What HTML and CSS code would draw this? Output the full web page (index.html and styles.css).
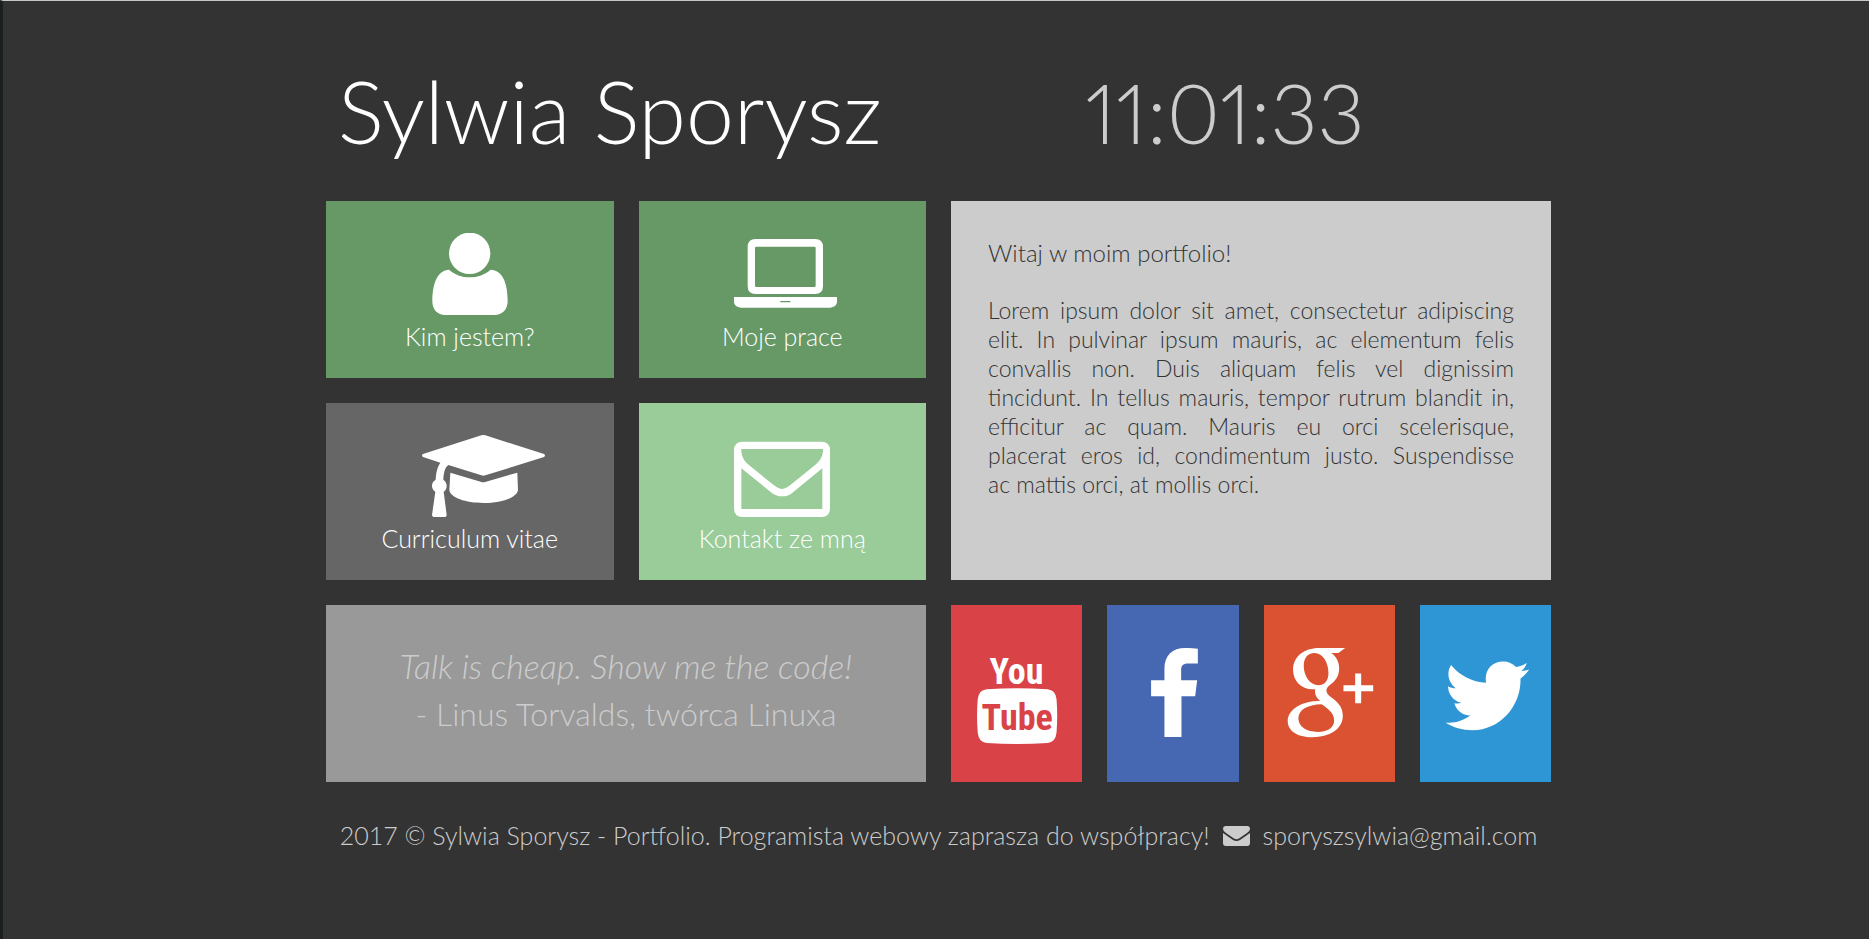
FILE: index.html
```html
<!DOCTYPE html>
<html lang="pl">
<head>
<meta charset="utf-8">
<meta name="viewport" content="width=device-width, initial-scale=1">
<title>Sylwia Sporysz - Portfolio</title>
<link rel="stylesheet" href="styles.css">
</head>
<body>
<div class="container">
  <header class="header">
    <h1 class="name">Sylwia Sporysz</h1>
    <time class="clock">11:01:33</time>
  </header>
  <main class="board">
    <nav class="tiles">
      <a class="tile tile-green" href="#about">
        <svg class="tile-icon" viewBox="208 114 480 252" aria-hidden="true"><circle cx="447" cy="175" r="62"/><path d="M385 224C402 239 424 247 447 247C471 247 493 239 510 224C545 226 561 262 561 318C561 344 545 360 521 360H374C350 360 335 344 335 318C335 262 352 226 385 224Z"/></svg>
        <span>Kim jestem?</span>
      </a>
      <a class="tile tile-green" href="#works">
        <svg class="tile-icon" viewBox="216 114 480 252" aria-hidden="true"><path fill-rule="evenodd" d="M377 132H555Q579 132 579 156V273Q579 297 555 297H377Q353 297 353 273V156Q353 132 377 132ZM379 155Q375 155 375 159V272Q375 276 379 276H553Q557 276 557 272V159Q557 155 553 155ZM312 306H621V320C621 331 610 338 596 338H337C323 338 312 331 312 320ZM451 318V322H481V318Z"/></svg>
        <span>Moje prace</span>
      </a>
      <a class="tile tile-dark" href="#cv">
        <svg class="tile-icon" viewBox="208 120 480 252" aria-hidden="true"><path d="M482 121q6-2 12 0L670 177q6 4 0 9L494 241q-6 2-12 0L383 210C374 216 369 232 368 254C374 258 378 264 378 272C378 280 375 286 369 290L378 360q0 5-4 6H339q-5-1-5-6L344 290C338 286 334 280 334 272C334 264 338 258 345 254C346 232 351 214 359 203L307 186q-6-5 0-9Z"/><path d="M389 233L480 260q8 3 16 0L590 233L592 286C588 308 544 324 489 324C434 324 390 308 386 286Z"/></svg>
        <span>Curriculum vitae</span>
      </a>
      <a class="tile tile-light" href="#contact">
        <svg class="tile-icon" viewBox="216 120 480 252" aria-hidden="true"><path fill-rule="evenodd" d="M338 140H574Q600 140 600 166V340Q600 366 574 366H338Q312 366 312 340V166Q312 140 338 140ZM334 162H579C580 180 572 196 558 208L484 268C474 276 466 282 456 282C446 282 438 276 428 268L354 208C340 196 333 180 334 162ZM334 220L422 291C436 302 446 304 456 304C468 304 478 302 490 291L577 220V342H334Z"/></svg>
        <span>Kontakt ze mną</span>
      </a>
    </nav>
    <section class="welcome">
      <p>Witaj w moim portfolio!</p>
      <p class="intro"><span class="full-lines">Lorem ipsum dolor sit amet, consectetur adipiscing elit. In pulvinar ipsum mauris, ac elementum felis convallis non. Duis aliquam felis vel dignissim tincidunt. In tellus mauris, tempor rutrum blandit in, efficitur ac quam. Mauris eu orci scelerisque,</span> <span class="full-lines">placerat eros id, condimentum justo. Suspendisse</span> ac mattis orci, at mollis orci.</p>
    </section>
    <blockquote class="quote">
      <em>Talk is cheap. Show me the code!</em>
      <span>- Linus Torvalds, twórca Linuxa</span>
    </blockquote>
    <nav class="socials">
      <a class="social youtube" href="#youtube" aria-label="YouTube">
        <svg viewBox="33 18 393 531"><text class="logo-text" x="229" y="256">You</text><path d="M140 270Q231 264 322 270Q346 272 349 300Q353 350 349 400Q346 430 322 431Q231 437 140 431Q116 430 113 400Q109 350 113 300Q116 272 140 270Z"/><text class="logo-text logo-text-red" x="231" y="392">Tube</text></svg>
      </a>
      <a class="social facebook" href="#facebook" aria-label="Facebook">
        <svg viewBox="501 18 393 531"><path d="M773 149v44h-30c-14 0-20 6-20 20v30h48l-6 48h-41v122h-51v-122h-40v-48h40v-34c0-40 24-62 62-62 14 0 30 1 38 2z"/></svg>
      </a>
      <a class="social google" href="#google" aria-label="Google Plus">
        <svg viewBox="39 18 393 531"><path fill-rule="evenodd" d="M282 147L262 162H240C256 172 264 190 264 208C264 232 252 246 238 256C230 262 226 268 226 274C226 282 232 288 242 296C262 310 275 326 275 350C275 390 235 414 184 414C138 414 110 394 110 366C110 332 150 306 208 305C196 296 190 284 192 270C154 274 126 248 126 212C126 174 158 147 204 147ZM190 162C170 162 158 178 158 200C158 230 176 258 202 258C222 258 232 242 232 222C232 192 216 162 190 162ZM212 315C168 316 142 332 142 358C142 382 166 398 200 398C232 398 249 384 249 364C249 344 238 334 212 315Z"/><path d="M312 223h18v35h36v18h-36v36h-18v-36h-35v-18h35z"/></svg>
      </a>
      <a class="social twitter" href="#twitter" aria-label="Twitter">
        <svg viewBox="507 18 393 531"><path d="M600 198C626 230 662 249 705 251C698 214 722 187 756 187C771 187 785 193 795 204C806 202 817 198 827 192C824 202 818 210 810 216C818 215 826 213 834 211C829 219 817 231 808 238C810 320 748 393 664 393C634 393 606 385 583 370C610 373 636 365 657 349C634 348 616 334 610 312C617 313 624 313 631 311C607 305 591 285 591 261C598 265 606 267 614 267C592 251 585 221 600 198Z"/></svg>
      </a>
    </nav>
  </main>
  <footer class="footer">
    <span>2017 © Sylwia Sporysz - Portfolio. Programista webowy zaprasza do współpracy!</span>
    <svg class="mail-icon" viewBox="0 0 27 20" aria-hidden="true"><path d="M3 0H24Q27 0 27 3Q27 5 24 7L16 12.500Q13.500 14 11 12.500L3 7Q0 5 0 3Q0 0 3 0ZM0 7L10 14Q13.500 16 17 14L27 7V17Q27 20 24 20H3Q0 20 0 17Z"/></svg>
    <a href="mailto:sporyszsylwia@gmail.com">sporyszsylwia@gmail.com</a>
  </footer>
</div>
</body>
</html>
```
FILE: styles.css
```css
* {
  box-sizing: border-box;
}

body {
  margin: 0;
  min-height: 100vh;
  border-top: 1px solid #c4c8c8;
  border-left: 3px solid #1c1f20;
  background: #333;
  color: #fff;
  font-family: Lato, "Open Sans", sans-serif;
  font-size: 24px;
  font-weight: 300;
  line-height: 29px;
}

a {
  color: inherit;
  text-decoration: none;
}

.container {
  max-width: 1230px;
  margin: 0 auto;
  padding: 56px 0 0 5px;
}

.header,
.board {
  display: grid;
  grid-template-columns: 1fr 1fr;
  gap: 25px;
}

.header {
  align-items: baseline;
  height: 144px;
}

.name,
.clock {
  margin: 0;
  font-size: 86px;
  font-weight: 300;
  line-height: 108px;
  white-space: nowrap;
}

.name {
  padding-left: 12px;
}

.clock {
  padding-right: 52px;
  color: #ccc;
  font-size: 82px;
  font-variant-numeric: proportional-nums;
  text-align: center;
}

.tiles {
  display: grid;
  grid-template-columns: 1fr 1fr;
  gap: 25px;
}

.tile {
  display: flex;
  flex-direction: column;
  align-items: center;
  padding: 32px 0 23px;
  font-size: 25px;
  line-height: 38px;
}

.tile-icon {
  width: 160px;
  height: 84px;
  fill: #fff;
}

.tile-green {
  background: #696;
}

.tile-dark {
  background: #666;
}

.tile-light {
  background: #9c9;
}

.welcome {
  padding: 37px;
  background: #ccc;
  color: #333;
  text-align: justify;
}

.welcome p {
  margin: 0 0 29px;
}

.welcome .intro {
  margin: 0;
  font-size: 23px;
}

.full-lines {
  display: block;
  text-align-last: justify;
}

.quote {
  display: flex;
  flex-direction: column;
  justify-content: center;
  margin: 0;
  padding-bottom: 8px;
  background: #999;
  color: #ccc;
  font-size: 32px;
  line-height: 48px;
  text-align: center;
}

.quote em {
  font-size: 34px;
}

.socials {
  display: grid;
  grid-template-columns: repeat(4, 1fr);
  gap: 25px;
}

.social svg {
  display: block;
  width: 100%;
  fill: #fff;
}

.youtube {
  background: #d94348;
}

.facebook {
  background: #4668b3;
}

.google {
  background: #da5232;
}

.twitter {
  background: #2f96d5;
}

.logo-text {
  font-family: "Roboto Condensed", Roboto, sans-serif;
  font-size: 108px;
  font-weight: 700;
  text-anchor: middle;
}

.logo-text-red {
  fill: #d94348;
}

.footer {
  display: flex;
  justify-content: center;
  align-items: center;
  gap: 13px;
  padding: 39px 0;
  color: #ccc;
  font-size: 25px;
}

.mail-icon {
  width: 27px;
  height: 20px;
  fill: #ccc;
}
```
